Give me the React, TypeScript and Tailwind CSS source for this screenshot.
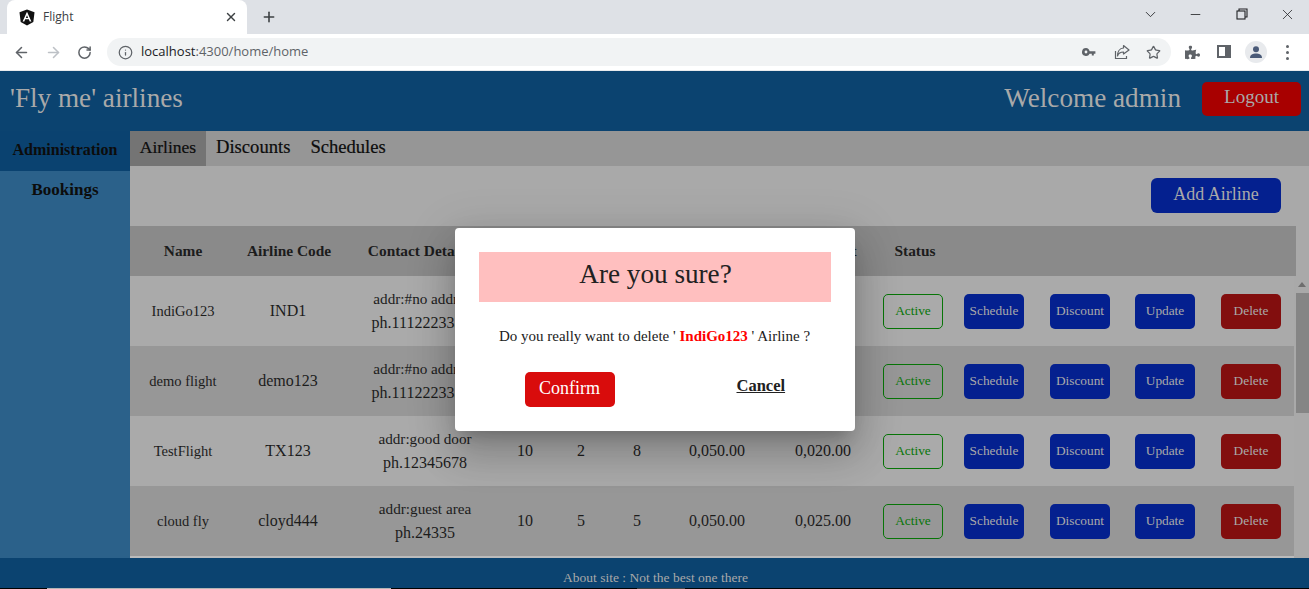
import { ArrowLeft, ArrowRight, RotateCw, Info, Star, ChevronDown, Minus, X, Plus } from "lucide-react";
import { FaPuzzlePiece } from "react-icons/fa";

const serif = "font-['Liberation_Serif','Times_New_Roman',serif]";
const cols = "grid grid-cols-[106px_104px_157px_56px_56px_56px_104px_108px_72px_90px_82px_88px_84px] w-[1164px] items-center text-center";

const rows = [
  { name: "IndiGo123", code: "IND1", a: "addr:#no address", p: "ph.11122233344", t: "10", b: "2", l: "8", c: "0,050.00", d: "0,020.00" },
  { name: "demo flight", code: "demo123", a: "addr:#no address", p: "ph.11122233344", t: "10", b: "2", l: "8", c: "0,050.00", d: "0,020.00" },
  { name: "TestFlight", code: "TX123", a: "addr:good door", p: "ph.12345678", t: "10", b: "2", l: "8", c: "0,050.00", d: "0,020.00" },
  { name: "cloud fly", code: "cloyd444", a: "addr:guest area", p: "ph.24335", t: "10", b: "5", l: "5", c: "0,050.00", d: "0,025.00" },
];

function Angular() {
  return (
    <svg width="16" height="17" viewBox="0 0 16 17">
      <path d="M8 0.5 L15.5 3.2 L14.3 13 L8 16.5 L1.7 13 L0.5 3.2 Z" fill="#111" />
      <path d="M8 2.8 L3.6 12.6 H5.3 L6.2 10.3 H9.8 L10.7 12.6 H12.4 Z M6.9 8.9 L8 6.2 L9.1 8.9 Z" fill="#fff" fillRule="evenodd" />
    </svg>
  );
}

function Btn({ label, cls }: { label: string; cls: string }) {
  return (
    <div className="flex justify-center">
      <button className={`w-[60px] h-[35px] rounded-[5px] text-[13.33px] ${cls}`}>{label}</button>
    </div>
  );
}

export default function App() {
  return (
    <div className={`h-[589px] w-[1309px] overflow-hidden flex flex-col ${serif}`}>
      {/* Browser chrome */}
      <div className="h-[34px] bg-[#dee1e6] flex items-end pl-[7px] font-['Open_Sans',sans-serif]">
        <div className="w-[240px] h-[34px] bg-white rounded-t-[8px] flex items-center pl-[12px] pr-[9px]">
          <Angular />
          <span className="ml-[8px] text-[12px] text-[#3c4043] flex-1">Flight</span>
          <X size={14} strokeWidth={2.4} className="text-[#3c4043]" />
        </div>
        <div className="h-[34px] flex items-center ml-[14px]">
          <Plus size={16} strokeWidth={2.4} className="text-[#3c4043]" />
        </div>
        <div className="flex-1" />
        <div className="h-[28px] self-start flex items-center text-[#202124]">
          <ChevronDown size={17} strokeWidth={1.2} className="mr-[29px]" />
          <Minus size={15} strokeWidth={1.3} className="mr-[33px]" />
          <svg width="12" height="12" viewBox="0 0 12 12" fill="none" stroke="#202124" strokeWidth="1.1" className="mr-[31px]">
            <rect x="1" y="3" width="8" height="8" />
            <path d="M3 3 V1 H11 V9 H9" />
          </svg>
          <X size={17} strokeWidth={1.1} className="mr-[13px]" />
        </div>
      </div>
      <div className="h-[36px] bg-white flex items-center pl-[13px] font-['Open_Sans',sans-serif] border-b border-[#e8eaed] box-content">
        <ArrowLeft size={17} strokeWidth={2.2} className="text-[#5f6368]" />
        <ArrowRight size={17} strokeWidth={2.2} className="text-[#bdc1c6] ml-[15px]" />
        <RotateCw size={15} strokeWidth={2.4} className="text-[#5f6368] ml-[15px]" />
        <div className="ml-[15px] w-[1064px] h-[28px] rounded-full bg-[#f1f3f4] flex items-center pl-[11px] pr-[10px]">
          <Info size={15} strokeWidth={2} className="text-[#5f6368]" />
          <span className="ml-[8px] text-[13px] text-[#5f6368]"><span className="text-[#202124]">localhost</span>:4300/home/home</span>
          <div className="flex-1" />
          <svg width="16" height="16" viewBox="0 0 16 16" fill="#5f6368" className="mr-[17px]">
            <path d="M5 4a4 4 0 1 0 3.6 5.7h2.2v1.8h2V9.7h1.6V7.3H8.6A4 4 0 0 0 5 4Zm0 2.6a1.4 1.4 0 1 1 0 2.8 1.4 1.4 0 0 1 0-2.8Z" />
          </svg>
          <svg width="16" height="16" viewBox="0 0 16 16" fill="none" stroke="#5f6368" strokeWidth="1.2" className="mr-[16px]">
            <path d="M1.5 7 V14.5 H12.5 V12" />
            <path d="M9.5 1.5 L15 6 L9.5 10 V8 C6.5 8 4.5 9 3.5 12 C3.5 8 5.5 4.3 9.5 4 Z" strokeLinejoin="round" />
          </svg>
          <Star size={15} strokeWidth={2} className="text-[#5f6368]" />
        </div>
        <FaPuzzlePiece size={15} className="text-[#5f6368] ml-[14px]" />
        <svg width="14" height="14" viewBox="0 0 14 14" className="ml-[17px]">
          <rect x="0" y="0" width="14" height="13" fill="#5f6368" />
          <rect x="2" y="2" width="6" height="9" fill="#fff" />
        </svg>
        <div className="ml-[14px] w-[22px] h-[22px] rounded-full bg-[#e8eaed] flex items-center justify-center">
          <svg width="14" height="14" viewBox="0 0 14 14" fill="#4a5a78">
            <circle cx="7" cy="4.2" r="3" />
            <path d="M1 13 C1 9.5 4 8.5 7 8.5 S13 9.5 13 13 Z" />
          </svg>
        </div>
        <div className="ml-[19px] flex flex-col gap-[3px]">
          <span className="w-[3px] h-[3px] rounded-full bg-[#5f6368]" />
          <span className="w-[3px] h-[3px] rounded-full bg-[#5f6368]" />
          <span className="w-[3px] h-[3px] rounded-full bg-[#5f6368]" />
        </div>
      </div>

      {/* Page */}
      <div className="relative flex-1 flex flex-col min-h-0">
        <header className="h-[60px] bg-[#0b4370] flex items-center pl-[10px] pr-[8px] text-[#a9a9a9] text-[27.2px] pb-[6px] shrink-0">
          <span>'Fly me' airlines</span>
          <span className="ml-auto">Welcome admin</span>
          <button className="ml-[21px] mt-[1px] w-[99px] h-[34px] rounded-[5px] bg-[#a80000] text-[19px] text-[#a9a9a9] pb-[2px]">Logout</button>
        </header>
        <div className="flex-1 flex min-h-0">
          <aside className="w-[130px] bg-[#2b618a] font-bold text-[#0c0c0c] text-center shrink-0">
            <div className="h-[40px] bg-[#0a4270] flex items-center justify-center pb-[3px] text-[16px]">Administration</div>
            <div className="h-[40px] flex items-center justify-center pb-[3px] text-[17px]">Bookings</div>
          </aside>
          <main className="flex-1 bg-[#a9a9a9] flex flex-col min-w-0">
            <nav className="h-[35px] bg-[#969696] flex text-[18.6px] text-[#0c0c0c] [-webkit-text-stroke:0.2px_#0c0c0c]">
              <a className="w-[76px] bg-[#747474] flex items-center justify-center pb-[3px] text-[17.5px]">Airlines</a>
              <a className="ml-[10px] flex items-center pb-[3px]">Discounts</a>
              <a className="ml-[20px] flex items-center pb-[3px]">Schedules</a>
            </nav>
            <div className="h-[60px] flex items-start justify-end pt-[12px] pr-[28px]">
              <button className="w-[130px] h-[35px] rounded-[6px] bg-[#04208f] text-[18px] text-[#a9a9a9] pb-[2px]">Add Airline</button>
            </div>
            <div className="h-[50px] bg-[#8a8a8a] w-[1166px] flex items-center text-[15.4px] font-bold text-[#1c1c1c]">
              <div className={cols}>
                <span>Name</span><span className="pl-[2px]">Airline Code</span><span>Contact Details</span>
                <span>Seats</span><span>Used</span><span>Left</span><span>Base</span><span>Total Cost</span><span className="pl-[4px]">Status</span>
              </div>
            </div>
            <div className="flex flex-1 min-h-0">
              <div className="w-[1164px] flex flex-col text-[16px] leading-[24px] text-[#1c1c1c]">
                {rows.map((r, i) => (
                  <div key={r.name} className={`h-[70px] shrink-0 flex items-center ${i % 2 ? "bg-[#979797]" : "bg-[#aaaaaa]"}`}>
                    <div className={cols}>
                      <span className="text-[14.5px]">{r.name}</span>
                      <span>{r.code}</span>
                      <span className="whitespace-nowrap pl-[13px]"><span className="text-[15.2px]">{r.a}</span><br />{r.p}</span>
                      <span>{r.t}</span>
                      <span>{r.b}</span>
                      <span>{r.l}</span>
                      <span>{r.c}</span>
                      <span>{r.d}</span>
                      <Btn label="Active" cls="border border-[#077507] text-[#077507]" />
                      <Btn label="Schedule" cls="bg-[#04208f] text-[#a9a9a9]" />
                      <Btn label="Discount" cls="bg-[#04208f] text-[#a9a9a9]" />
                      <Btn label="Update" cls="bg-[#04208f] text-[#a9a9a9]" />
                      <Btn label="Delete" cls="bg-[#820e0e] text-[#a9a9a9]" />
                    </div>
                  </div>
                ))}
                <div className="flex-1 bg-[#bbbbbb]" />
              </div>
              <div className="flex-1 flex flex-col items-end bg-[#a9a9a9]">
                <div className="h-[17px] w-full flex items-center justify-center">
                  <div className="w-0 h-0 border-l-[4px] border-r-[4px] border-b-[5px] border-l-transparent border-r-transparent border-b-[#6e6e6e]" />
                </div>
                <div className="h-[120px] w-[13px] bg-[#858585]" />
              </div>
            </div>
          </main>
        </div>
        <footer className="h-[30px] bg-[#0b4370] text-[13.5px] text-[#a9a9a9] flex items-end justify-center pl-[2px] shrink-0">
          About site : Not the best one there
        </footer>
        <div className="h-[1px] bg-black flex shrink-0">
          <div className="ml-[47px] w-[344px] bg-[#b5b5b5]" />
          <div className="ml-[246px] w-[48px] bg-[#444444]" />
        </div>

        {/* Dialog */}
        <div className="absolute inset-0 flex items-center justify-center pb-[1px]">
          <div className="w-[400px] h-[203px] bg-white rounded-[4px] p-[24px] shadow-[0_11px_15px_-7px_rgba(0,0,0,0.2),0_24px_38px_3px_rgba(0,0,0,0.14),0_9px_46px_8px_rgba(0,0,0,0.12)]">
            <div className="h-[50px] bg-[#ffbfbf] text-[27.2px] text-[#212121] flex items-center justify-center pb-[5px] pl-[2px]">Are you sure?</div>
            <p className="mt-[23px] text-[15px] leading-[22px] text-[#212121] text-center">
              Do you really want to delete ' <b className="text-[#ff0000]">IndiGo123</b> ' Airline ?
            </p>
            <div className="mt-[25px] flex items-start pl-[46px]">
              <button className="w-[90px] h-[35px] rounded-[5px] bg-[#d90c0c] text-white text-[18px] pb-[2px]">Confirm</button>
              <a className="ml-[122px] mt-[2px] text-[16.5px] font-bold underline text-[#212121]">Cancel</a>
            </div>
          </div>
        </div>
      </div>
    </div>
  );
}
